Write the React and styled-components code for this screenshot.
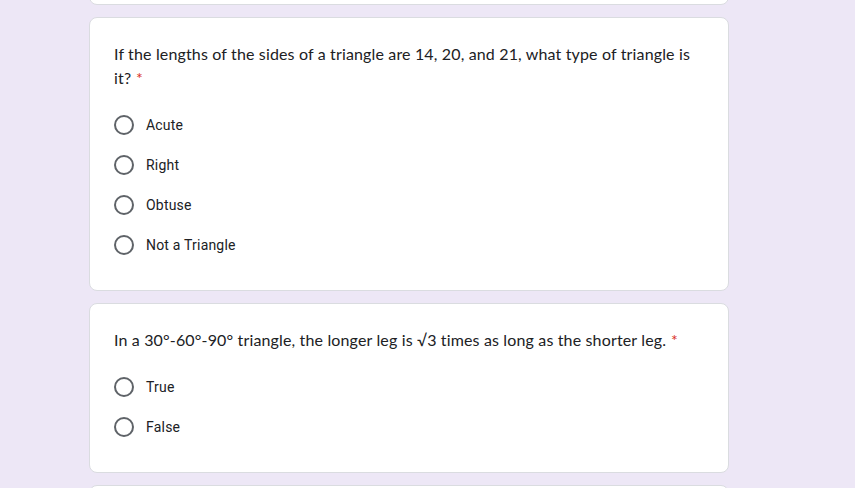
import React from 'react';
import styled, { createGlobalStyle } from 'styled-components';

const GlobalStyle = createGlobalStyle`
  html, body {
    margin: 0;
    padding: 0;
    background-color: #ede7f6;
  }
  body {
    font-family: Roboto, "Liberation Sans", sans-serif;
    overflow: hidden;
  }
`;

const Page = styled.div`
  height: 488px;
  overflow: hidden;
  padding-left: 89px;
`;

const Stack = styled.div`
  display: flex;
  flex-direction: column;
  gap: 12px;
  width: 640px;
  margin-top: -97px;
`;

const Card = styled.div`
  background-color: #fff;
  border: 1px solid #dadce0;
  border-radius: 8px;
  padding: 24px 24px 25px;
  min-height: ${props => props.stub ? '51px' : 'auto'};
`;

const Title = styled.div`
  font-family: Lato, "Open Sans", sans-serif;
  font-size: 16px;
  line-height: 24px;
  letter-spacing: 0.15px;
  color: #202124;
  margin-bottom: 15px;
`;

const Required = styled.span`
  color: #d93025;
  margin-left: 0.3em;
`;

const Options = styled.div`
  display: flex;
  flex-direction: column;
`;

const Option = styled.label`
  display: flex;
  align-items: center;
  gap: 12px;
  height: 40px;
  cursor: pointer;
`;

const Radio = styled.span`
  box-sizing: border-box;
  width: 20px;
  height: 20px;
  border: 2px solid #5f6368;
  border-radius: 50%;
  flex-shrink: 0;
`;

const OptionText = styled.span`
  font-family: Roboto, "Liberation Sans", sans-serif;
  font-size: 14px;
  letter-spacing: 0.2px;
  color: #202124;
`;

const questions = [
  {
    id: 'q1',
    title: 'If the lengths of the sides of a triangle are 14, 20, and 21, what type of triangle is it?',
    options: ['Acute', 'Right', 'Obtuse', 'Not a Triangle'],
  },
  {
    id: 'q2',
    title: 'In a 30°-60°-90° triangle, the longer leg is √3 times as long as the shorter leg.',
    options: ['True', 'False'],
  },
];

const Question = ({ q }) => (
  <Card>
    <Title>
      {q.title}
      <Required>*</Required>
    </Title>
    <Options>
      {q.options.map(opt => (
        <Option key={opt}>
          <Radio />
          <OptionText>{opt}</OptionText>
        </Option>
      ))}
    </Options>
  </Card>
);

const App = () => {
  return (
    <>
      <GlobalStyle />
      <Page>
        <Stack>
          <Card stub />
          {questions.map(q => <Question key={q.id} q={q} />)}
          <Card stub />
        </Stack>
      </Page>
    </>
  );
};

export default App;
